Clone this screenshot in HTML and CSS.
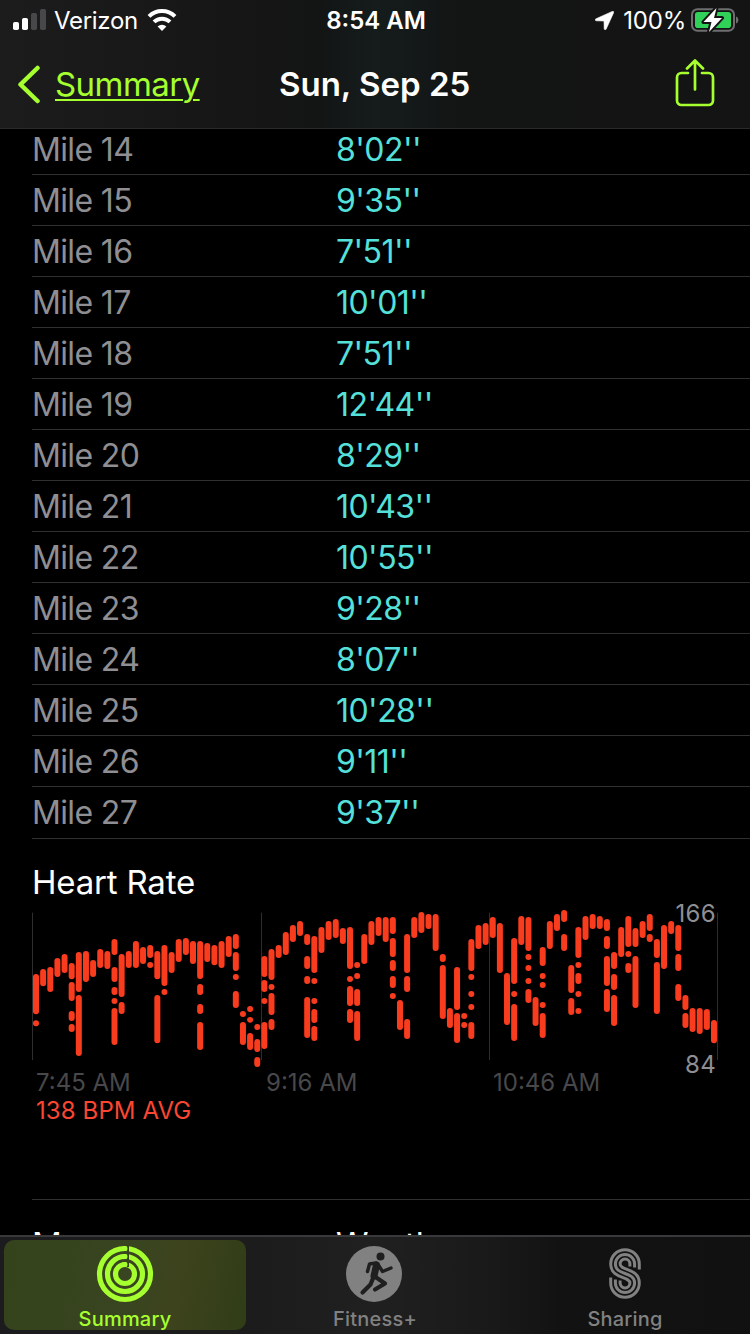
FILE: index.html
```
<!DOCTYPE html>
<html lang="en">
<head>
    <meta charset="UTF-8">
    <meta name="viewport" content="width=device-width, initial-scale=1.0">
    <title>Sun, Sep 25</title>
    <link rel="stylesheet" href="styles.css">
</head>
<body>
    <div class="phone">
        <header class="header">
            <div class="status-bar">
                <div class="status-left">
                    <svg class="signal" width="34" height="22" viewBox="0 0 34 22">
                        <rect x="0" y="13" width="6" height="8" rx="1.8" fill="#fff"/>
                        <rect x="9" y="9" width="6" height="12" rx="1.8" fill="#fff"/>
                        <rect x="18" y="4" width="6" height="17" rx="1.8" fill="#48484a"/>
                        <rect x="27" y="0" width="6" height="21" rx="1.8" fill="#48484a"/>
                    </svg>
                    <span class="carrier">Verizon</span>
                    <svg class="wifi" width="30" height="22" viewBox="0 0 30 22">
                        <path d="M2 7.4a18.6 18.6 0 0 1 26 0" fill="none" stroke="#fff" stroke-width="4"/>
                        <path d="M7 12.9a11.5 11.5 0 0 1 16 0" fill="none" stroke="#fff" stroke-width="4"/>
                        <path d="M15 22l-4.4-4.4a6.3 6.3 0 0 1 8.8 0z" fill="#fff"/>
                    </svg>
                </div>
                <div class="status-time">8:54 AM</div>
                <div class="status-right">
                    <svg class="location" width="19" height="19" viewBox="0 0 19 19">
                        <path d="M17.3 .4 1 7.8c-1.2.6-1 1.9.3 2l7.7.2.2 7.7c.1 1.3 1.5 1.5 2 .3L18.6 1.7c.4-1-.3-1.7-1.3-1.3z" fill="#fff" stroke="#fff" stroke-width=".6"/>
                    </svg>
                    <span class="percent">100%</span>
                    <svg class="battery" width="48" height="24" viewBox="0 0 48 24">
                        <rect x="1" y="1.2" width="42" height="21.5" rx="5.5" fill="none" stroke="#6e6e70" stroke-width="2"/>
                        <rect x="4" y="4" width="36" height="16" rx="2.8" fill="#30d158"/>
                        <path d="M45 8.5c3.2 1.3 3.2 5.7 0 7z" fill="#6e6e70"/>
                        <path d="M25.5 0 12.5 14h8L18 24l13-14h-8z" fill="#fff" stroke="#141414" stroke-width="4" paint-order="stroke" stroke-linejoin="round"/>
                    </svg>
                </div>
            </div>
            <nav class="nav-bar">
                <a class="back">
                    <svg width="24" height="40" viewBox="0 0 24 40">
                        <path d="M20.5 4 3.5 20.5l17 16.5" fill="none" stroke="#a6ff2e" stroke-width="4.5" stroke-linecap="round" stroke-linejoin="round"/>
                    </svg>
                    <span class="back-label">Summary</span>
                </a>
                <h1 class="title">Sun, Sep 25</h1>
                <svg class="share" width="40" height="50" viewBox="0 0 40 50">
                    <path d="M13 14H6.5a4.5 4.5 0 0 0-4.5 4.5v23A4.5 4.5 0 0 0 6.5 46h27a4.5 4.5 0 0 0 4.5-4.5v-23a4.5 4.5 0 0 0-4.5-4.5H27M20 30.5V1.5M12 9.5l8-8 8 8" fill="none" stroke="#a6ff2e" stroke-width="2.7" stroke-linecap="round" stroke-linejoin="round"/>
                </svg>
            </nav>
        </header>

        <main class="content">
            <div class="splits">
                <div class="split"><span class="mile">Mile 14</span><span class="pace">8'02''</span></div>
                <div class="split"><span class="mile">Mile 15</span><span class="pace">9'35''</span></div>
                <div class="split"><span class="mile">Mile 16</span><span class="pace">7'51''</span></div>
                <div class="split"><span class="mile">Mile 17</span><span class="pace">10'01''</span></div>
                <div class="split"><span class="mile">Mile 18</span><span class="pace">7'51''</span></div>
                <div class="split"><span class="mile">Mile 19</span><span class="pace">12'44''</span></div>
                <div class="split"><span class="mile">Mile 20</span><span class="pace">8'29''</span></div>
                <div class="split"><span class="mile">Mile 21</span><span class="pace">10'43''</span></div>
                <div class="split"><span class="mile">Mile 22</span><span class="pace">10'55''</span></div>
                <div class="split"><span class="mile">Mile 23</span><span class="pace">9'28''</span></div>
                <div class="split"><span class="mile">Mile 24</span><span class="pace">8'07''</span></div>
                <div class="split"><span class="mile">Mile 25</span><span class="pace">10'28''</span></div>
                <div class="split"><span class="mile">Mile 26</span><span class="pace">9'11''</span></div>
                <div class="split"><span class="mile">Mile 27</span><span class="pace">9'37''</span></div>
            </div>

            <section class="heart-rate">
                <h2 class="section-title">Heart Rate</h2>
                <div class="chart">
                    <svg id="hrChart" width="730" height="168" viewBox="0 0 2190 504">
                        <path d="M37.5 38V480M724.5 38V480M1408.5 38V480M2092.5 38V480" stroke="#2e2e30" stroke-width="3"/>
                    </svg>
                    <span class="max">166</span>
                    <span class="min">84</span>
                </div>
                <div class="times">
                    <span>7:45 AM</span>
                    <span>9:16 AM</span>
                    <span>10:46 AM</span>
                </div>
                <div class="average">138 BPM AVG</div>
            </section>

            <section class="more">
                <span>Map</span>
                <span>Weather</span>
            </section>
        </main>

        <footer class="tab-bar">
            <a class="tab active">
                <svg width="58" height="58" viewBox="0 0 58 58">
                    <g fill="none" stroke="#a6ff2e" stroke-width="5.2">
                        <circle cx="29" cy="29" r="25.5"/>
                        <circle cx="29" cy="29" r="17.5"/>
                        <circle cx="29" cy="29" r="9.5"/>
                    </g>
                    <path d="M31.8 0V22" stroke="#37431d" stroke-width="2.4"/>
                    <path d="M28 3.5h1M28 11.5h1M28 19.5h1" stroke="#a6ff2e" stroke-width="5" stroke-linecap="round"/>
                </svg>
                <span>Summary</span>
            </a>
            <a class="tab">
                <svg width="58" height="58" viewBox="0 0 58 58">
                    <circle cx="28" cy="29" r="28" fill="#818181"/>
                    <circle cx="34.5" cy="11.5" r="4" fill="#1f1f1f"/>
                    <g fill="none" stroke="#1f1f1f" stroke-linecap="round" stroke-linejoin="round">
                        <path d="M30.5 20 28 31" stroke-width="7"/>
                        <path d="M30 18 23.5 19 21.5 26.5M33 21l3.5 5.5 8.5-3.5" stroke-width="3.4"/>
                        <path d="M27.5 32 24.5 39.5 16.5 47.5M29.5 32l9.5 6.5-10 6" stroke-width="4.2"/>
                    </g>
                </svg>
                <span>Fitness+</span>
            </a>
            <a class="tab">
                <svg width="58" height="58" viewBox="0 0 58 58">
                    <g fill="none" stroke="#818181" stroke-width="3">
                        <path d="M43.3 24.5V19a14.3 14.3 0 0 0-28.6 0C14.7 34 33.9 31 33.9 38a4.9 4.9 0 0 1-9.8 0V35.5"/>
                        <path d="M38.6 22.5V19a9.6 9.6 0 0 0-19.2 0C19.4 31 38.6 26 38.6 38a9.6 9.6 0 0 1-19.2 0V34.5"/>
                        <path d="M33.9 21.5V19a4.9 4.9 0 0 0-9.8 0C24.1 26 43.3 23 43.3 38a14.3 14.3 0 0 1-28.6 0V32.5"/>
                    </g>
                </svg>
                <span>Sharing</span>
            </a>
        </footer>
    </div>

    <script>
        // One entry per time slot, each holding [top, bottom] pairs of the drawn ranges
        const heartRate = [
            [[222,343],[361,379]], [[207,259]], [[201,276]], [[174,231]], [[162,219]],
            [[189,238],[246,303],[333,363],[372,396]], [[156,276],[285,468]], [[153,246]], [[180,231]], [[147,204]],
            [[153,207]], [[117,165],[201,246],[261,285],[294,312],[324,435]], [[162,291],[306,342]], [[153,204]], [[123,204]],
            [[141,192]], [[135,174],[186,204]], [[153,238],[285,430]], [[135,258],[267,285]], [[156,219]],
            [[117,186]], [[114,165]], [[123,192]], [[123,237],[252,285],[312,342],[366,450]], [[129,186]],
            [[135,196]], [[123,204]], [[108,171]], [[102,147],[156,213],[222,240],[273,324]], [[333,351],[366,435]],
            [[318,336],[351,368],[399,450]], [[372,390],[417,456],[471,501]], [[168,231],[240,276],[294,312],[366,447]], [[147,240],[252,270],[279,345],[357,390]], [[135,174]],
            [[96,165]], [[75,126]], [[63,108]], [[102,135],[168,207],[228,252],[291,414]], [[108,219],[234,252],[294,312],[327,369],[378,423]],
            [[81,159]], [[63,120]], [[57,114]], [[84,132]], [[81,207],[228,246],[258,318],[327,369]],
            [[186,204],[219,237],[267,318],[333,423]], [[102,192]], [[63,135]], [[51,108]], [[51,126]],
            [[51,102],[114,171],[180,213],[228,264],[279,297]], [[300,390]], [[102,219],[228,276],[357,417]], [[51,114]], [[36,99]],
            [[42,87]], [[42,153]], [[162,186],[195,357]], [[324,384]], [[201,330],[339,429]],
            [[339,357],[366,384]], [[117,213],[222,240],[273,291],[312,330],[366,417]], [[75,147]], [[69,135]], [[51,114]],
            [[69,219]], [[219,375]], [[114,252],[273,291],[312,423]], [[48,135]], [[51,153],[162,180],[195,213],[234,252],[267,309]],
            [[291,378]], [[141,198],[219,237],[246,264],[306,324],[339,414]], [[63,147]], [[42,93]], [[30,66],[102,153]],
            [[195,279],[294,345]], [[81,174],[186,204],[219,252],[273,291],[324,342]], [[48,120]], [[42,87]], [[48,87]],
            [[57,93],[108,147],[168,258],[267,336]], [[156,207],[222,270],[285,378]], [[81,171]], [[48,141],[153,171],[189,219]], [[84,141],[168,324]],
            [[63,114]], [[42,93],[102,126]], [[117,174],[186,342]], [[75,207]], [[63,102]],
            [[75,153],[162,213],[252,303]], [[285,330],[339,384]], [[324,396]], [[324,402]], [[327,390]],
            [[360,430]]
        ];

        const barWidth = 18;
        const step = 21.41;

        function drawChart() {
            const chart = document.getElementById('hrChart');
            heartRate.forEach((ranges, i) => {
                ranges.forEach(([top, bottom]) => {
                    const bar = document.createElementNS('http://www.w3.org/2000/svg', 'rect');
                    bar.setAttribute('x', 48 + i * step - barWidth / 2);
                    bar.setAttribute('y', top);
                    bar.setAttribute('width', barWidth);
                    bar.setAttribute('height', bottom - top);
                    bar.setAttribute('rx', barWidth / 2);
                    bar.setAttribute('class', 'bar');
                    chart.appendChild(bar);
                });
            });
        }

        drawChart();
    </script>
</body>
</html>
```
FILE: styles.css
```
* {
    box-sizing: border-box;
}
body {
    margin: 0;
    background: #000;
    color: #fff;
    font-family: Inter, "Liberation Sans", sans-serif;
}
.phone {
    width: 750px;
    height: 1334px;
    display: flex;
    flex-direction: column;
    overflow: hidden;
}
.header {
    flex: none;
    height: 129px;
    background: linear-gradient(90deg, #1c1c1c 0%, #161616 30%, #131414 42%, #151c1c 50%, #131414 62%, #141414 100%);
    border-bottom: 1px solid #2a2a2a;
}
.status-bar {
    height: 40px;
    padding: 0 11px 0 13px;
    display: grid;
    grid-template-columns: 1fr auto 1fr;
    align-items: center;
    font-size: 24px;
}
.status-left, .status-right {
    display: flex;
    align-items: center;
}
.status-right {
    justify-content: flex-end;
}
.carrier {
    margin: 0 9px 0 7px;
    letter-spacing: -0.3px;
}
.status-time {
    font-weight: 600;
    letter-spacing: 0;
}
.percent {
    margin: 0 5px 0 9px;
    letter-spacing: -0.2px;
}
.nav-bar {
    height: 88px;
    padding: 0 35px 0 17px;
    display: grid;
    grid-template-columns: 262px auto 1fr;
    align-items: center;
}
.back {
    display: flex;
    align-items: center;
    gap: 14px;
    color: #a6ff2e;
}
.back-label {
    font-size: 33px;
    letter-spacing: -0.55px;
    text-decoration: underline;
    text-decoration-thickness: 2px;
    text-underline-offset: 3px;
}
.title {
    margin: 0;
    font-size: 33px;
    font-weight: 600;
    letter-spacing: 0;
}
.share {
    justify-self: end;
}
.content {
    flex: 1;
    min-height: 0;
    padding-left: 32px;
    overflow: hidden;
}
.splits {
    margin-top: -5px;
}
.split {
    height: 51px;
    display: grid;
    grid-template-columns: 304px 1fr;
    border-bottom: 1px solid #303032;
    font-size: 32px;
    line-height: 52px;
}
.split:last-child {
    height: 52px;
}
.mile {
    color: #8e8e93;
    letter-spacing: -0.65px;
}
.pace {
    color: #55e0da;
    letter-spacing: -0.55px;
}
.heart-rate {
    height: 361px;
    padding-top: 23px;
    border-bottom: 1px solid #303032;
}
.section-title {
    margin: 0;
    font-size: 33px;
    font-weight: 400;
    line-height: 40px;
    letter-spacing: -0.2px;
}
.chart {
    position: relative;
    height: 168px;
    margin: -2px 0 0 -12px;
}
.chart svg {
    display: block;
}
.bar {
    fill: #fa3c1e;
}
.max, .min {
    position: absolute;
    right: 34px;
    font-size: 24px;
    line-height: 28px;
    letter-spacing: 0.3px;
    color: #8e8e93;
}
.max {
    top: 0;
}
.min {
    top: 151px;
}
.times {
    display: grid;
    grid-template-columns: 230px 227px 1fr;
    padding-left: 4px;
    margin-top: 1px;
    font-size: 24px;
    line-height: 28px;
    color: #48484a;
}
.average {
    padding-left: 4px;
    font-size: 24px;
    line-height: 28px;
    letter-spacing: 0.1px;
    color: #fa4632;
}
.more {
    display: grid;
    grid-template-columns: 304px 1fr;
    padding-top: 24px;
    font-size: 33px;
    line-height: 40px;
}
.tab-bar {
    flex: none;
    height: 99px;
    border-top: 2px solid #39393b;
    display: grid;
    grid-template-columns: repeat(3, 1fr);
    background: linear-gradient(90deg, #1c1c1e 0%, #1c1c1c 35%, #202020 50%, #191919 66%, #121212 75%, #111 100%);
}
.tab {
    height: 90px;
    margin: 3px 4px 0;
    padding-top: 5px;
    display: flex;
    flex-direction: column;
    align-items: center;
    font-size: 20px;
    font-weight: 500;
    line-height: 32px;
    letter-spacing: 0.2px;
    color: #818181;
    border-radius: 10px;
}
.tab svg {
    flex: none;
}
.active {
    color: #a6ff2e;
    background: linear-gradient(100deg, #34431c 0%, #384520 50%, #3d431d 70%, #303d17 100%);
}
```
